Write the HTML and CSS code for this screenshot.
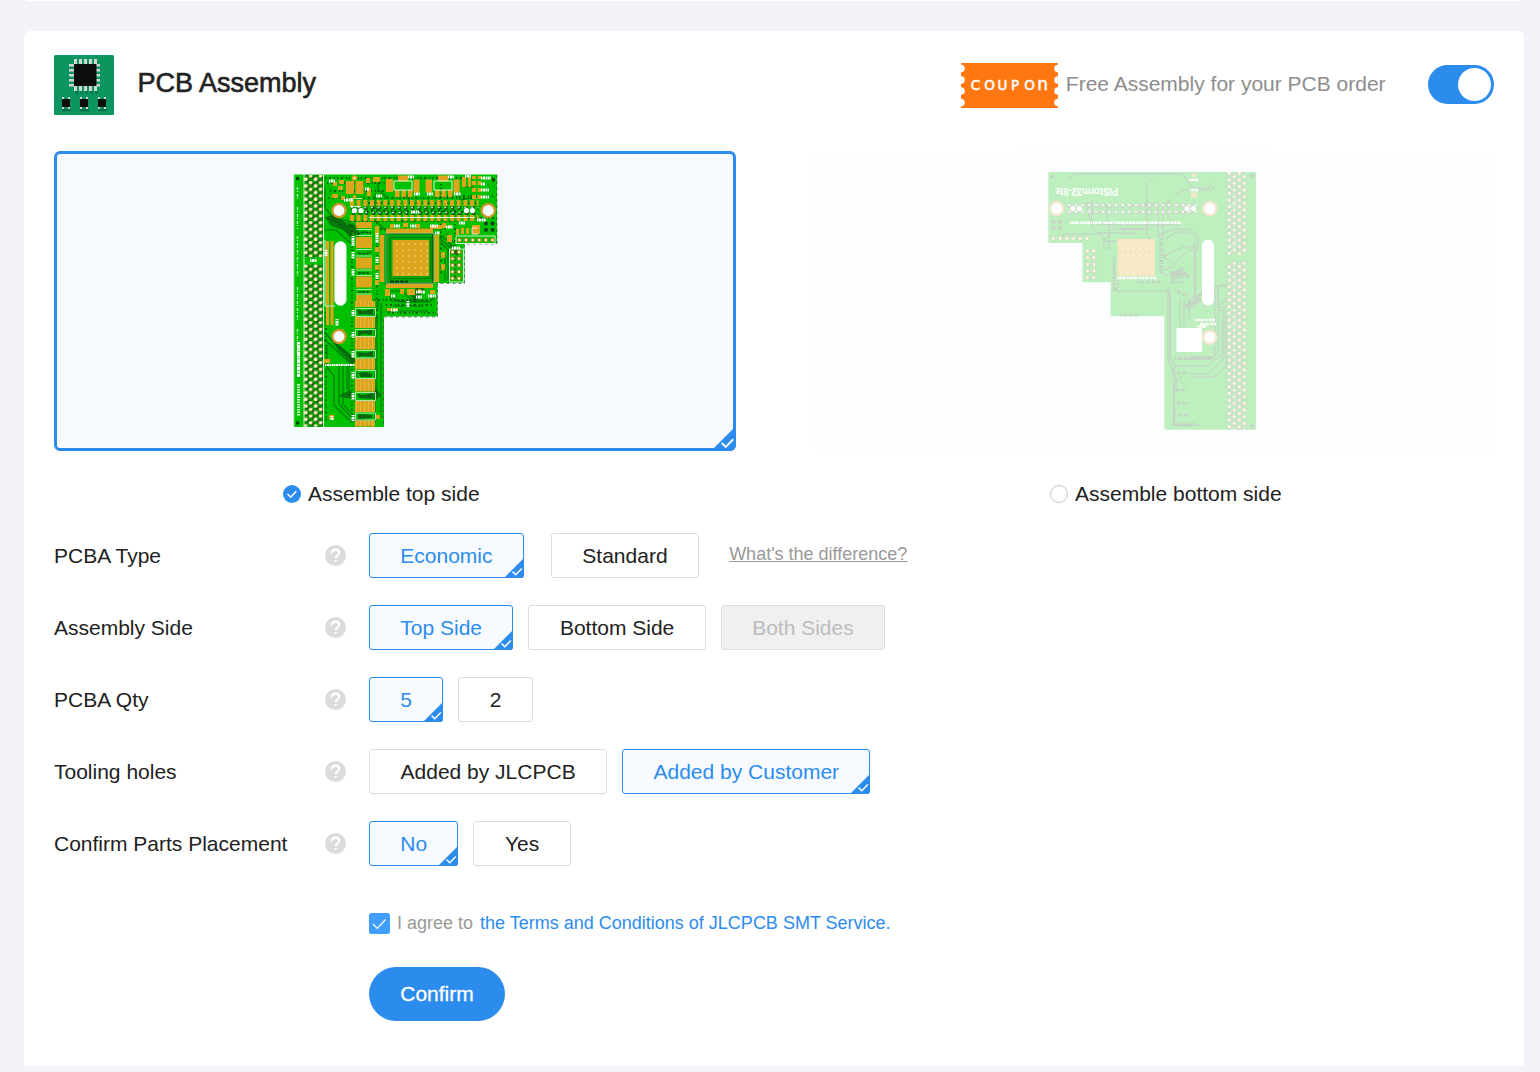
FILE: index.html
```html
<!DOCTYPE html>
<html lang="en">
<head>
<meta charset="utf-8">
<title>PCB Assembly</title>
<link rel="stylesheet" href="styles.css">
</head>
<body>
<svg class="defs" width="0" height="0" aria-hidden="true">
  <defs>
    <symbol id="corner" viewBox="0 0 20 20"><path d="M20 0V20H0Z" fill="#2c8ced"/><path d="M8.6 13.6l3.2 3.2 6-6.2" fill="none" stroke="#fff" stroke-width="1.5"/></symbol>
    <symbol id="help" viewBox="0 0 21 21"><circle cx="10.5" cy="10.5" r="10.5" fill="#dcdcdc"/><path d="M7 8.2C7 5.8 8.4 4.6 10.5 4.6s3.6 1.2 3.6 3.2c0 2.4-3.5 2.7-3.5 5.3" fill="none" stroke="#fff" stroke-width="2.1"/><rect x="9.4" y="14.8" width="2.3" height="2.3" rx=".6" fill="#fff"/></symbol>
  </defs>
</svg>
<div class="previous-card"></div>
<main class="card">
  <header class="head">
    <svg class="logo" viewBox="0 0 60 60">
      <rect width="60" height="60" rx="1.5" fill="#0b955f"/>
      <g stroke="#067247" stroke-width="2.6"><path d="M21.5 37.5h22" stroke-dasharray="2.6 2.4"/><path d="M8 55h9M26 55h9M44 55h9"/></g>
      <g stroke="#d3d5d4" fill="none"><path d="M20 6.5h24M20 33.5h24" stroke-width="5" stroke-dasharray="3 2"/><path d="M17.5 9v22.5M43.500 9v22.500" stroke-width="5" stroke-dasharray="2.500 2.500"/></g>
      <rect x="20" y="9" width="22.500" height="22" fill="#0d0d0d"/>
      <path d="M8 42h2v12H8zM14 42h2v12h-2zM26 42h2v12h-2zM32 42h2v12h-2zM44 42h2v12h-2zM50 42h2v12h-2z" fill="#d3d5d4"/>
      <path d="M8 44h8v8H8zM26 44h8v8h-8zM44 44h8v8h-8z" fill="#0d0d0d"/>
    </svg>
    <h1 class="title">PCB Assembly</h1>
    <svg class="coupon" viewBox="0 0 97 45">
      <rect width="97" height="45" fill="#ff7711"/>
      <g fill="#fff"><circle cx="0" cy="5.500" r="3.800"/><circle cx="0" cy="17" r="3.800"/><circle cx="0" cy="28" r="3.800"/><circle cx="0" cy="39.500" r="3.800"/><circle cx="97" cy="5.500" r="3.800"/><circle cx="97" cy="17" r="3.800"/><circle cx="97" cy="28" r="3.800"/><circle cx="97" cy="39.500" r="3.800"/></g>
      <text class="coupon-text" x="9.800 23.300 36.500 50 63.300" y="27">COUPO<tspan class="coupon-n" x="76.300">n</tspan></text>
    </svg>
    <span class="promo">Free Assembly for your PCB order</span>
    <span class="switch"><span class="knob"></span></span>
  </header>

  <section class="sides">
    <div class="side">
      <div class="preview selected">
        <svg class="board-top" viewBox="293 174 206 255">
          <defs>
            <pattern id="pins" patternUnits="userSpaceOnUse" x="303.300" y="174.300" width="9.900" height="6.670">
              <rect width="9.900" height="6.670" fill="#0a6a0c"/><path d="M0 0L9.900 6.670M0 6.670L9.900 0" stroke="#00b400" stroke-width="1"/>
              <g fill="#d6bd62"><circle cx="2.400" cy="5" r="2.100"/><circle cx="7.350" cy="1.670" r="2"/></g>
              <g fill="#fffbe8"><circle cx="2.400" cy="5" r="1.350"/><circle cx="7.350" cy="1.670" r="1.300"/></g>
            </pattern>
            <pattern id="headerpads" patternUnits="userSpaceOnUse" x="350" y="200" width="6.670" height="21"><path d="M0 0h4v6H0zM0 15h4v6H0z" fill="#dca51b"/><circle cx="2.500" cy="8" r="1.900" fill="#0d4212"/><circle cx="2" cy="7.500" r=".9" fill="#e9ffe8"/><circle cx="3.500" cy="13" r="1.900" fill="#0d4212"/><circle cx="3" cy="12.500" r=".9" fill="#e9ffe8"/></pattern>
            <pattern id="stripe" patternUnits="userSpaceOnUse" width="4" height="20"><rect width="4" height="20" fill="#dca51b"/><path d="M.3 0v20" stroke="#eccb68" stroke-width=".6"/></pattern>
            <pattern id="dots" patternUnits="userSpaceOnUse" x="394" y="241" width="6" height="6"><rect width="6" height="6" fill="#dca51b"/><circle cx="3" cy="3" r=".7" fill="#f8e6b5"/></pattern>
          </defs>
          <path d="M293.500 174.500H497V243.500H464.500V283H437.500V316.500H384V427H293.500Z" fill="#00c000"/>
          <path d="M497 175V244H464.500V283.500H437.500V317H383.500V427" fill="none" stroke="#36563a" stroke-width=".7" stroke-dasharray="3 3"/>
          <rect x="303.500" y="175" width="20" height="82.500" fill="url(#pins)"/><rect x="303.500" y="264.500" width="20" height="162" fill="url(#pins)"/>
          <path d="M304 174v253M323.500 174v253M293.800 174v253" stroke="#e4f9e4" stroke-width=".9"/>
          <path d="M297.500 187v13m0 7v22m0 7v42m0 9v35m0 7v24" stroke="#b6eab7" stroke-width="1.400" stroke-dasharray="3 1 1 2"/>
          <path d="M298.500 342v35" stroke="#fff" stroke-width="3" stroke-dasharray="2 .7 4 .6"/><path d="M298.500 384v32" stroke="#d2f5d3" stroke-width="3" stroke-dasharray="1.500 1"/>
          <circle cx="297.500" cy="178.500" r="1.700" fill="#083a0c"/><circle cx="297.500" cy="423" r="1.700" fill="#083a0c"/>
          <!-- traces -->
          <g fill="none" stroke="#087512" stroke-width="1.100">
            <path d="M325 188v20l9 10 14 3 10 12v8M327 218l19 8 9 14M324 230h12l16 14M331 216l11 10 12 16M335 217l18 10"/>
            <path d="M324 332l31 30M324 339l28 26M330 338l27 25v18M334 342l22 20M327 345v22l7 9v29l15 15h16M343 364v40l12 13M347 366v24M339 364v40l16 17M349 364v30l7 8"/>
            <path d="M375 193v15l7 6M374 220l14 12M378 178v12l10 8M378 300v8l-3 3v112M381 303v115M377 314v80M389 291h14l9 10h16M392 301h20l10-9M385 293l14 9h30l8-7M386 311h42M393 306h30"/>
            <path d="M440 238l17 17M442 236l16 15M441 243l10 10M446 233l8 10M445 255v27M448 250v30M450 220l18-12M465 187h9M460 200l16-3M404 192l10 16"/>
          </g>
          <path d="M325 217l10-3 6 6 6 5 7 6-3 6-8-7-12-4zM341 228l12-5 6 6v9l-6-4zM330 338l18 14 9 9-5 3-14-14zM374 386l7 9-8 8zM338 396l12-6 6 9-10-1zM448 243l12 8-3 5zM409 293l10-7 6 3-10 14z" fill="#07540e" opacity=".65"/>
          <g fill="none" stroke="#073e0c" stroke-width="1.300" stroke-dasharray="1.300 2.700 2 3.100 1 1.800">
            <path d="M325 178h168M327 183h58M330 191h62M328 198h148M364 203h112M367 211h92M350 221h110M376 229h70M374 300h60M386 305h46M388 313h48M352 226v200M377 222v100M441 184v90M455 224v56M447 196h46M464 218h30M326 312v110"/>
          </g>
          <!-- upper components -->
          <g fill="#dca51b">
            <path d="M346 181h8v13h-8zM355.500 181h8v13h-8zM333 182h4v4h-4zM339 180h5v4h-5zM338 186h5v4h-5zM332 194h6v4h-6zM341 196h4v4h-4zM366 178h4v5h-4zM373 177h7v5h-7zM367 188h4v8h-4zM386 179h7v13h-7zM398 175.500h10v6h-10zM413.500 179.500h6v13h-6zM425.500 179.500h6.500v13h-6.500zM438 175.500h10v6h-10zM453.500 179.500h6v13h-6zM395 190h4.500v7H395zM401.500 190h4.500v7h-4.500zM408 190h4.500v7H408zM435 190h4.500v7H435zM441.500 190h4.500v7h-4.500zM448 190h4.500v7H448zM462 177h4v10h-4zM468 177h3v10h-3z"/>
            <path d="M472 176h4v3h-4zM477.500 176h3.500v3h-3.500zM472 181h4v4h-4zM477.500 181h3.500v4h-3.500zM472 188h4v4h-4zM477.500 188h3.500v4h-3.500zM472 195h4v4h-4zM477.500 195h3.500v4h-3.500zM472 225h8v9h-8zM442 223h4v5h-4zM449 225h3v3h-3zM447 235h5v7h-5zM456 229h3v6h-3zM461 228h3v6h-3zM466 228h3v6h-3zM390 224h4v4h-4zM403 223h5v4h-5zM416 224h4v4h-4zM430 225h12v4h-12zM441 252h4v6h-4zM441 264h4v6h-4z"/>
            <path d="M356 222h16v6h-16zM356 237h16v11h-16zM356 257.500h16v11h-16zM356 276.500h16v11h-16zM356 295h16v6h-16z"/>
            <path d="M375 226h4v9h-4zM375 247h4v5h-4zM375 265h4v5h-4zM375 280h4v5h-4z"/>
            <path d="M326 241h3v64h-3zM330.500 241h3v64h-3zM326 306h3v19h-3zM330.500 306h3v19h-3zM324 359h6v4h-6zM329 415h5v4h-5zM376 415h4v4h-4zM387 308h5v3h-5zM394 308h4v3h-4zM385 289h5v7h-5zM400 289h4v5h-4zM407 289h8v6h-8zM418 289h3v4h-3zM430 290h5v4h-5z"/>
          </g>
          <rect x="350" y="200" width="128.500" height="21" fill="url(#headerpads)"/>
          <path d="M350 206.500h11M369 217.500h106M350 198.500h12M394 181h18v9h-18zM434 181h18v9h-18zM325 240v66h10" fill="none" stroke="#f2fff1" stroke-width=".9"/>
          <g fill="#fff"><circle cx="354.500" cy="210.500" r="2.600"/><circle cx="361" cy="210.500" r="2.600"/><circle cx="466.500" cy="210.500" r="2.600"/><circle cx="472.500" cy="210.500" r="2.600"/></g>
          <!-- connector pad column -->
          <g fill="url(#stripe)"><path d="M355 301h20v6h-20zM355 317h20v11h-20zM355 336.500h20v13h-20zM355 358.500h20v11h-20zM355 379h20v12.500h-20zM355 401h20v11h-20zM355 420.500h20v6h-20z"/></g>
          <g fill="#0a6412"><path d="M357 309l6 2 10-2v6l-9-1-6 1zM358 331l14-1v5l-8-1-6 2zM357 352l9 1 7-2v6l-10-1-5 1zM358 373l8-1 6 2v3h-11zM357 394l6 1 10-2v6l-14-1zM358 414l14 1v3l-14 1z"/></g>
          <g fill="none" stroke="#d3f3d2" stroke-width=".8"><path d="M355.500 308.500h20v8h-20zM355.500 329.500h20v7h-20zM355.500 350.500h20v7.500h-20zM355.500 370.500h20v8h-20zM355.500 392.500h20v8h-20zM355.500 413h20v7h-20zM356 229.500h16M356 235.500h16M356 249.500h16M356 256h16M356 270h16M356 275.500h16M356 289.500h16M356 294h16"/></g>
          <g stroke="#084f0f" stroke-width="1.500" fill="none"><path d="M358 234l6-2 7 1M358 253l7 1 6-2M358 273h12M358 292h12" stroke-dasharray="3 1"/></g>
          <!-- processor -->
          <path d="M386 233.500h47v50h-47z" fill="#02a806" stroke="#0a4b10" stroke-width="1.300"/><path d="M390 237.500h41v41h-41z" fill="none" stroke="#077b0d" stroke-width="1.200"/>
          <rect x="392.500" y="240" width="36.500" height="36" fill="url(#dots)"/>
          <path d="M386 228.500h47v4.500h-47zM386 284h47v4h-47zM379.500 235h4.500v47h-4.500zM434.500 235h4.500v47h-4.500z" fill="#dca51b"/>
          <path d="M386 233.300h48v50h-48z" fill="none" stroke="#ceefc1" stroke-width=".6"/>
          <path d="M390 281.500h18" stroke="#05380a" stroke-width="2" stroke-dasharray="4 1"/>
          <!-- silkscreen marks -->
          <g stroke="#fff" stroke-width="3" fill="none" stroke-dasharray="1.300 .6 2.200 .5"><path d="M329 181h6M344 200h9M365 189h4M376 196h6M408 177h6M414 194h6M427 194h6M448 177h6M454 194h7M465 176h6M481 178h10M481 184h4M481 190h8M481 197h8M411 212h8M394 226h6M410 226h6M430 226h8M446 227h7M459 223h6M477 220h9M435 233h5M452 248h8M353 236v10M353 252v7M353 269v7M353 310v6M353 332v6M353 351v7M353 372v7M353 393v7M353 415v6M377 233v10M377 257v6M377 273v6M310 260.500h7M337 319v7M326 250v6M416 292h9M416 297h6M391 296h4M428 296h8M391 310h7M408 301v6M332 416v4"/><path d="M325 365h30" stroke-width="2"/></g>
          <g stroke="#fff" stroke-width=".8" fill="none"><path d="M456 236h39v7.500h-39zM449.500 249h14v33h-14zM478 228h-6v6h6"/></g>
          <g fill="#173f1c"><circle cx="486" cy="223.500" r="2"/><circle cx="492.500" cy="223.500" r="2"/><circle cx="486" cy="230" r="2"/><circle cx="492.500" cy="230" r="2"/><circle cx="493.500" cy="180" r="1.700"/></g>
          <path d="M459.500 240h33M452.500 252v28M459 252v28" stroke="#a8861c" stroke-width="4.600" stroke-linecap="round" stroke-dasharray="0 6.600"/>
          <path d="M459.500 240h33M452.500 252v28M459 252v28" stroke="#fff9da" stroke-width="2.400" stroke-linecap="round" stroke-dasharray="0 6.600"/>
          <g fill="#f7faff" stroke="#c99a2a" stroke-width="2.300"><circle cx="339" cy="210.500" r="6.600"/><circle cx="488.200" cy="210.500" r="6.600"/><circle cx="339" cy="336.500" r="6.600"/></g>
          <rect x="334.700" y="241.500" width="11.500" height="64" rx="5.700" fill="#fbfdff" stroke="#d4efd5" stroke-width=".7"/>
          <g fill="#dca51b"><circle cx="354.500" cy="178" r="2.700"/><circle cx="354.500" cy="197" r="2"/></g><circle cx="354.500" cy="178" r="1" fill="#fff"/>
        </svg>
        <svg class="corner preview-corner"><use href="#corner"/></svg>
      </div>
      <label class="caption caption-top"><svg class="radio" viewBox="0 0 18 18"><circle cx="9" cy="9" r="9" fill="#2c8ced"/><path d="M4.500 9l3.200 3.200 5.600-6" fill="none" stroke="#fff" stroke-width="1.500"/></svg>Assemble top side</label>
    </div>
    <div class="side">
      <div class="preview faded">
        <svg class="board-bottom" viewBox="1048 171 209 260">
          <defs>
            <pattern id="pinsb" patternUnits="userSpaceOnUse" x="1226.800" y="170" width="10" height="6.670">
              <path d="M0 0L10 6.670M0 6.670L10 0" stroke="#1d8a22" stroke-width=".8"/>
              <g fill="#5d5134"><circle cx="2.500" cy="3.300" r="2.400"/><circle cx="7.500" cy="0" r="2.400"/><circle cx="7.500" cy="6.670" r="2.400"/></g>
              <g fill="#ffe3a8"><circle cx="2.500" cy="3.300" r="1.600"/><circle cx="7.500" cy="0" r="1.600"/><circle cx="7.500" cy="6.670" r="1.600"/></g>
            </pattern>
            <pattern id="vias" patternUnits="userSpaceOnUse" x="1066.500" y="202" width="6.670" height="6.670"><circle cx="3.300" cy="3.300" r="2.200" fill="#2a442b"/><circle cx="3" cy="3" r="1.200" fill="#fff"/></pattern>
            <pattern id="dotsb" patternUnits="userSpaceOnUse" x="1119" y="240" width="6" height="6"><rect width="6" height="6" fill="#dda51b"/><circle cx="3" cy="3" r=".7" fill="#fff"/></pattern>
          </defs>
          <path d="M1048.300 172H1256V429.700H1166L1164.300 428V316.300H1110.700V282.300H1082.500V243H1048.300Z" fill="#00c000"/>
          <g fill="none" stroke="#1c4220" stroke-width="1">
            <path d="M1070 180v-3l3-3h109l7 7v3l6 4h14l3-6M1175 195l8-5h28l5-5M1147 181v54l6 7v30M1150 180h3M1092 200v27l5 6h38M1086 202l4 18M1107 204v18l6 7h36M1130 205h24v-4M1158 203v34M1163 240v-35l8-5M1168 200v16l4 5M1063 237v-3h38l5 7h44M1104 237v12M1095 224h22l9 9M1119 225h60"/>
            <path d="M1162 233l13-4h15l8 8v12l-3 3v48l-8 8M1165 239l12-7h12l6 6v62M1163 257l20-10h14M1163 271l8-4 17-17h10M1160 232v40M1165 250v8l7 4M1114 255v33l4 3h48l4 3v65l4 3v51M1168 287v75l8 14v12l-2 5v31l4 2h14M1170 290v72M1118 280v8h-5M1180 299v28M1184 299v28M1189 299v20M1192 309l19-19M1188 307l16-17M1185 306l10-11M1170 272h10l5 4M1171 278h12M1165 275h18"/>
            <path d="M1215 286v70l-5 3h-35M1218 287v65l-7 7h-27M1222 320v34l-14 12h-32l-4 7M1226 315v52l-12 10h-23M1224 312v46l-15 16h-18M1216 287l11-3M1218 292v15h6M1215 286h12M1220 305l7-8M1223 309l4-4M1218 310l9 1M1174 403v22h26M1174 394v-10l8-8"/>
          </g>
          <g stroke="#1d3d20" stroke-width="2.500" stroke-dasharray="1 2 2 1"><path d="M1172 273l18 4M1170 282h14M1114 262v30M1120 315h18M1173 390h14M1174 403h14M1175 415h14M1172 424h24M1175 358h25M1174 373h14M1137 282h24M1109 220v30M1120 229h24M1162 239v35M1175 290l12 6M1188 307l14-14"/></g>
          <path d="M1170 273l12-6 7 9-9-1-8 7zM1191 356h23v3h-27zM1184 306l12-8 7 1-15 10z" fill="#1d4a20" opacity=".7"/>
          <rect x="1066.500" y="202" width="131" height="13" fill="url(#vias)"/>
          <rect x="1226.800" y="172" width="20" height="83" fill="url(#pinsb)"/><rect x="1226.800" y="262" width="20" height="168" fill="url(#pinsb)"/>
          <g fill="#2a502b"><circle cx="1052" cy="176.500" r="2"/><circle cx="1252.500" cy="175.500" r="2"/><circle cx="1252.500" cy="426" r="2"/><circle cx="1053.500" cy="221.500" r="2"/><circle cx="1060" cy="221.500" r="2"/><circle cx="1053.500" cy="228" r="2"/><circle cx="1060" cy="228" r="2"/></g>
          <path d="M1053.500 238.500h34M1087.500 251v28M1094 251v28" stroke="#6b6136" stroke-width="4.600" stroke-linecap="round" stroke-dasharray="0 6.650"/><path d="M1053.500 238.500h34M1087.500 251v28M1094 251v28" stroke="#ffe8b8" stroke-width="2.800" stroke-linecap="round" stroke-dasharray="0 6.650"/>
          <rect x="1117.500" y="239" width="37.500" height="37" fill="url(#dotsb)"/>
          <rect x="1176.500" y="328" width="25.500" height="24" fill="#fff"/><rect x="1202" y="239.500" width="12" height="66" rx="6" fill="#fff"/>
          <g fill="#fff" stroke="#d09a45" stroke-width="2.300"><circle cx="1056.700" cy="208.500" r="6.700"/><circle cx="1209.700" cy="208.500" r="6.700"/><circle cx="1209.700" cy="337.300" r="6.700"/></g>
          <g fill="#fff"><circle cx="1073" cy="208.500" r="2.600"/><circle cx="1079.500" cy="208.500" r="2.600"/><circle cx="1187" cy="208.500" r="2.600"/><circle cx="1193.500" cy="208.500" r="2.600"/></g>
          <path d="M1191 192.500h6v5h-6zM1192 173h4v4h-4z" fill="#dda51b"/>
          <text class="board-name" transform="translate(1118 187.500) rotate(180)" textLength="63" lengthAdjust="spacingAndGlyphs">PIStorm32-lite</text>
          <path d="M1070 222.700h112M1117 278h40M1189 180h10M1190 190h8M1195 320h20M1200 324h16M1197 326.500h10" stroke="#fff" stroke-width="2.600" stroke-dasharray="1.500 .7 2.500 .6 3.500 1 1 .5"/>
        </svg>
      </div>
      <label class="caption caption-bottom"><span class="radio radio-off"></span>Assemble bottom side</label>
    </div>
  </section>

  <section class="options">
    <div class="row"><span class="label">PCBA Type</span><svg class="help"><use href="#help"/></svg>
      <button class="option on">Economic<svg class="corner"><use href="#corner"/></svg></button><button class="option far">Standard</button><a class="difference">What's the difference?</a></div>
    <div class="row"><span class="label">Assembly Side</span><svg class="help"><use href="#help"/></svg>
      <button class="option on">Top Side<svg class="corner"><use href="#corner"/></svg></button><button class="option">Bottom Side</button><button class="option off">Both Sides</button></div>
    <div class="row"><span class="label">PCBA Qty</span><svg class="help"><use href="#help"/></svg>
      <button class="option on">5<svg class="corner"><use href="#corner"/></svg></button><button class="option">2</button></div>
    <div class="row"><span class="label">Tooling holes</span><svg class="help"><use href="#help"/></svg>
      <button class="option">Added by JLCPCB</button><button class="option on">Added by Customer<svg class="corner"><use href="#corner"/></svg></button></div>
    <div class="row"><span class="label">Confirm Parts Placement</span><svg class="help"><use href="#help"/></svg>
      <button class="option on">No<svg class="corner"><use href="#corner"/></svg></button><button class="option">Yes</button></div>
  </section>

  <div class="agree"><svg class="checkbox" viewBox="0 0 21 21"><rect width="21" height="21" rx="2.500" fill="#409eff"/><path d="M4 11l4.300 4.300L16.500 6.500" fill="none" stroke="#fff" stroke-width="1.200"/></svg><span class="agree-text">I agree to</span><a class="terms">the Terms and Conditions of JLCPCB SMT Service.</a></div>
  <button class="confirm">Confirm</button>
</main>
</body>
</html>
```
FILE: styles.css
```css
* { box-sizing: border-box; }
body {
  margin: 0;
  height: 1072px;
  overflow: hidden;
  background: #f1f3f8;
  color: #222;
  font: 21px/24px "Liberation Sans", Arial, sans-serif;
}
svg { display: block; flex: none; }
.defs { position: absolute; }
button { font: inherit; color: inherit; }
.previous-card { height: 1px; margin: 0 19px 30px 27px; background: #fff; }
.card {
  width: 1500px;
  height: 1035px;
  margin-left: 24px;
  padding: 24px 30px 0;
  border-radius: 6px 6px 0 0;
  background: #fff;
}
.head { display: flex; height: 60px; align-items: center; }
.logo { width: 60px; height: 60px; }
.title {
  margin: 0 auto 4px 23.5px;
  font-size: 27px;
  line-height: 32px;
  font-weight: 400;
  -webkit-text-stroke: .6px #222;
}
.coupon { width: 97px; height: 45px; margin-right: 8px; }
.coupon-text {
  fill: #fff;
  stroke: #fff;
  stroke-width: .5px;
  font: 13.5px "DejaVu Sans", sans-serif;
}
.coupon-n { font-size: 17px; }
.promo { color: #8d8d8d; margin-bottom: 2px; }
.switch {
  display: flex;
  justify-content: flex-end;
  width: 66px;
  height: 39px;
  margin: 0 0 1px 42.4px;
  padding: 3px;
  border-radius: 20px;
  background: #2c8ced;
}
.knob { width: 33px; height: 33px; border-radius: 50%; background: #fff; }
.sides { display: flex; gap: 76px; margin-top: 36px; }
.side { width: 682px; }
.preview {
  position: relative;
  display: flex;
  justify-content: center;
  height: 300px;
  padding-top: 20px;
  border-radius: 6px;
  background: #f7fbff;
}
.selected { border: 3px solid #2c8ced; padding-left: 2px; }
.faded { padding-right: 1px; opacity: .25; }
.board-top { width: 206px; height: 255px; }
.board-bottom { width: 209px; height: 260px; }
.board-name { fill: #fff; font: bold 10px "Liberation Sans", Arial, sans-serif; }
.corner {
  position: absolute;
  right: -1px;
  bottom: -1px;
  width: 20px;
  height: 20px;
  border-radius: 0 0 3px 0;
}
.preview-corner { right: -3px; bottom: -3px; width: 25px; height: 25px; border-radius: 0 0 6px 0; }
.caption { display: flex; align-items: center; gap: 7px; height: 24px; margin-top: 31px; }
.caption-top { padding-left: 229px; }
.caption-bottom { padding-left: 238px; }
.radio { width: 18px; height: 18px; }
.radio-off { border: 1px solid #c8c8c8; border-radius: 50%; }
.options { display: grid; gap: 27px; margin-top: 27px; }
.row { display: flex; height: 45px; align-items: center; }
.label { width: 271px; margin-bottom: -1px; }
.help { width: 21px; height: 21px; margin-right: 23px; }
.option {
  position: relative;
  height: 45px;
  margin: 0 15px 0 0;
  padding: 1px 30.55px 0;
  border: 1px solid #dcdcdc;
  border-radius: 3px;
  background: #fff;
}
.on { padding: 1px 30.3px 0; border-color: #2c8ced; background: #f7fbff; color: #2c8ced; }
.off { padding: 1px 30.3px 0; background: #f0f0f0; color: #bcbcbc; }
.far { margin-left: 12px; margin-right: 30px; }
.difference { margin-bottom: 4px; color: #999; font-size: 18px; text-decoration: underline; }
.agree { display: flex; align-items: center; height: 24px; margin: 45px 0 0 315px; font-size: 18px; }
.checkbox { width: 21px; height: 21px; margin: 0 7px 0 0; }
.agree-text { margin-right: 7px; color: #999; }
.terms { color: #2c8ced; }
.confirm {
  display: block;
  width: 136px;
  height: 54px;
  margin: 32px 0 0 315px;
  padding: 0;
  border: 0;
  border-radius: 27px;
  background: #2c8ced;
  color: #fff;
  -webkit-text-stroke: .3px #fff;
}
```
